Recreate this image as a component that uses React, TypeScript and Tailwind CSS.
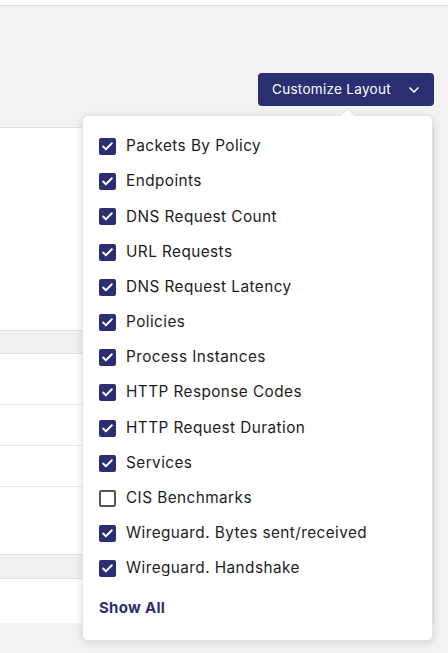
import { ChevronDown, Check } from "lucide-react";

const widgets = [
  { label: "Packets By Policy", checked: true },
  { label: "Endpoints", checked: true },
  { label: "DNS Request Count", checked: true },
  { label: "URL Requests", checked: true },
  { label: "DNS Request Latency", checked: true },
  { label: "Policies", checked: true },
  { label: "Process Instances", checked: true },
  { label: "HTTP Response Codes", checked: true },
  { label: "HTTP Request Duration", checked: true },
  { label: "Services", checked: true },
  { label: "CIS Benchmarks", checked: false },
  { label: "Wireguard. Bytes sent/received", checked: true },
  { label: "Wireguard. Handshake", checked: true },
];

function Checkbox({ checked }: { checked: boolean }) {
  if (!checked) {
    return <div className="h-[17px] w-[17px] shrink-0 rounded-[2px] border-2 border-[#555555] bg-white" />;
  }
  return (
    <div className="flex h-[17px] w-[17px] shrink-0 items-center justify-center rounded-[2px] bg-[#2b2f72]">
      <Check size={13} strokeWidth={3.5} className="text-white" />
    </div>
  );
}

export default function App() {
  return (
    <div className="relative h-[653px] w-[448px] overflow-hidden bg-[#f2f2f2] font-['Inter',sans-serif] text-[#1c1c1c]">
      <div className="h-[6px] border-b border-[#dcdcde] bg-white" />

      <div className="flex justify-end pr-[14px] pt-[67px]">
        <button className="flex h-[33px] w-[176px] items-center justify-between rounded-[4px] bg-[#2b2f72] pl-[14px] pr-[12px] text-[13.5px] tracking-[0.3px] text-white">
          <span>Customize Layout</span>
          <ChevronDown size={16} strokeWidth={2.5} />
        </button>
      </div>

      {/* dashboard panels behind the menu */}
      <div className="mt-[21px] w-[434px] border-r border-[#e0e0e0]">
        <div className="h-[204px] border-y border-[#e0e0e0] bg-white" />
        <div className="h-[23px] border-b border-[#e0e0e0] bg-[#f0f0f0]" />
        <div className="h-[51px] border-b border-[#e6e6e6] bg-white" />
        <div className="h-[41px] border-b border-[#e6e6e6] bg-white" />
        <div className="h-[41px] border-b border-[#e6e6e6] bg-white" />
        <div className="h-[68px] border-b border-[#e0e0e0] bg-white" />
        <div className="h-[24px] border-b border-[#e0e0e0] bg-[#f0f0f0]" />
        <div className="h-[44px] bg-white" />
      </div>

      {/* customize layout dropdown */}
      <div className="absolute left-[82px] top-[115px] w-[351px] rounded-[6px] border border-[#e2e2e2] bg-white pb-[20px] pl-[16px] pt-[13px] shadow-[0_2px_8px_rgba(0,0,0,0.12)]">
        <div className="absolute -top-[6px] left-[259px] h-[11px] w-[11px] rotate-45 border-l border-t border-[#e2e2e2] bg-white" />
        {widgets.map((w) => (
          <div key={w.label} className="flex h-[35.2px] items-center gap-[10px]">
            <Checkbox checked={w.checked} />
            <span className="text-[15.3px] tracking-[0.45px]">{w.label}</span>
          </div>
        ))}
        <div className="mt-[11px] text-[15px] font-bold tracking-[0.3px] text-[#2b2f72]">Show All</div>
      </div>
    </div>
  );
}
